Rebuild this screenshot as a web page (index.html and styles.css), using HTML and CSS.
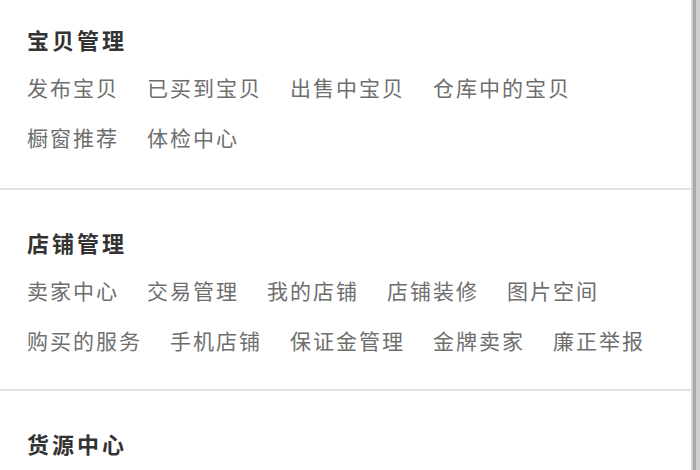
FILE: index.html
```html
<!DOCTYPE html>
<html lang="zh-CN">
<head>
<meta charset="utf-8">
<title>卖家菜单</title>
<link rel="stylesheet" href="styles.css">
</head>
<body>
<div class="frame">
  <main class="menu">
    <section class="group">
      <h2 class="title">宝贝管理</h2>
      <ul class="links">
        <li>发布宝贝</li>
        <li>已买到宝贝</li>
        <li>出售中宝贝</li>
        <li>仓库中的宝贝</li>
      </ul>
      <ul class="links">
        <li>橱窗推荐</li>
        <li>体检中心</li>
      </ul>
    </section>
    <section class="group">
      <h2 class="title">店铺管理</h2>
      <ul class="links">
        <li>卖家中心</li>
        <li>交易管理</li>
        <li>我的店铺</li>
        <li>店铺装修</li>
        <li>图片空间</li>
      </ul>
      <ul class="links">
        <li>购买的服务</li>
        <li>手机店铺</li>
        <li>保证金管理</li>
        <li>金牌卖家</li>
        <li>廉正举报</li>
      </ul>
    </section>
    <section class="group">
      <h2 class="title">货源中心</h2>
    </section>
  </main>
  <div class="scrollbar"><div class="track"></div></div>
</div>
</body>
</html>
```

FILE: styles.css
```css
html, body {
  margin: 0;
  padding: 0;
  background: #ffffff;
  overflow: hidden;
}

.frame {
  display: flex;
  width: 700px;
  height: 470px;
  overflow: hidden;
}

.menu {
  flex: 1;
  min-width: 0;
  font-family: "Noto Sans CJK SC", "Microsoft YaHei", sans-serif;
}

.group {
  padding: 37px 0 24px 27px;
  border-bottom: 2px solid #e2e2e2;
}

.group:first-child {
  padding-top: 24px;
  padding-bottom: 26px;
}

.title {
  margin: 0 0 8px 0;
  height: 30px;
  line-height: 30px;
  font-size: 22px;
  font-weight: bold;
  letter-spacing: 3px;
  color: #333333;
}

.links {
  list-style: none;
  margin: 0;
  padding: 0;
  display: flex;
  column-gap: 28px;
}

.links li {
  line-height: 50px;
  height: 50px;
  font-size: 21px;
  letter-spacing: 2px;
  color: #6e6e6e;
  white-space: nowrap;
}

.scrollbar {
  width: 9px;
  flex: none;
  background: #cfcfcf;
  border-left: 1px solid #d8d8d8;
  box-sizing: border-box;
}

.track {
  width: 3px;
  height: 100%;
  margin-left: 1px;
  background: #a9a9a9;
}
```
